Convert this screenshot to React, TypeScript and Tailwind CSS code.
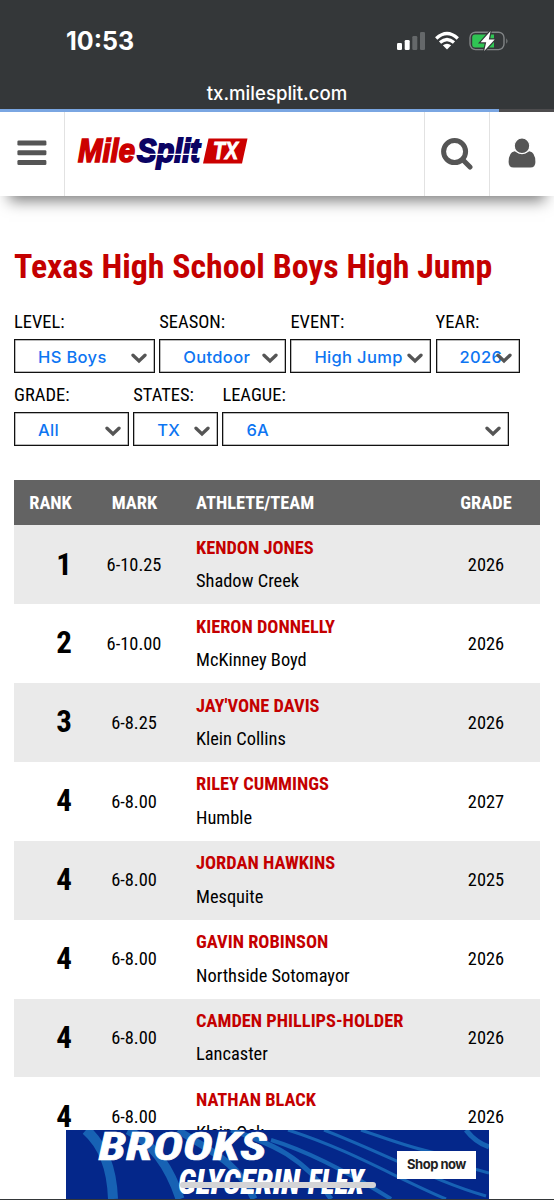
import { clsx } from "clsx";

type Athlete = {
    rank: number;
    mark: string;
    name: string;
    team: string;
    grade: string;
};

const ATHLETES: Athlete[] = [
    { rank: 1, mark: "6-10.25", name: "Kendon Jones", team: "Shadow Creek", grade: "2026" },
    { rank: 2, mark: "6-10.00", name: "Kieron Donnelly", team: "McKinney Boyd", grade: "2026" },
    { rank: 3, mark: "6-8.25", name: "Jay'Vone Davis", team: "Klein Collins", grade: "2026" },
    { rank: 4, mark: "6-8.00", name: "Riley Cummings", team: "Humble", grade: "2027" },
    { rank: 4, mark: "6-8.00", name: "Jordan Hawkins", team: "Mesquite", grade: "2025" },
    { rank: 4, mark: "6-8.00", name: "Gavin Robinson", team: "Northside Sotomayor", grade: "2026" },
    { rank: 4, mark: "6-8.00", name: "Camden Phillips-Holder", team: "Lancaster", grade: "2026" },
    { rank: 4, mark: "6-8.00", name: "Nathan Black", team: "Klein Oak", grade: "2026" },
];

const FILTER_ROWS = [
    [
        { label: "LEVEL:", value: "HS Boys", width: "w-[141px]" },
        { label: "SEASON:", value: "Outdoor", width: "w-[127px]" },
        { label: "EVENT:", value: "High Jump", width: "w-[141px]" },
        { label: "YEAR:", value: "2026", width: "w-[84px]" },
    ],
    [
        { label: "GRADE:", value: "All", width: "w-[115px]" },
        { label: "STATES:", value: "TX", width: "w-[85px]" },
        { label: "LEAGUE:", value: "6A", width: "w-[287px]" },
    ],
];

function StatusIcons() {
    return (
        <svg width="114" height="24" viewBox="0 0 114 24">
            <rect x="1" y="13" width="5" height="7" rx="1.3" fill="#fff" />
            <rect x="8.7" y="10" width="5" height="10" rx="1.3" fill="#fff" />
            <rect x="16.3" y="6" width="5" height="14" rx="1.3" fill="#65686a" />
            <rect x="24" y="2" width="5" height="18" rx="1.3" fill="#65686a" />
            <g fill="none" stroke="#fff" strokeWidth="3.3">
                <path d="M40.2 8.5Q51 -1.5 61.8 8.5" />
                <path d="M44 12.6Q51 6.4 58 12.6" />
            </g>
            <path d="M46.8 15.3Q51 12 55.2 15.3L51 19.6Z" fill="#fff" />
            <rect x="74" y="2.2" width="34" height="17.4" rx="5.5" fill="none" stroke="#818486" strokeWidth="1.4" />
            <path d="M110.3 8.2Q112.7 11 110.3 13.8Z" fill="#818486" />
            <path d="M79 4.6H98V17.4H79Q76.2 17.4 76.2 14.5V7.5Q76.2 4.6 79 4.6Z" fill="#30c554" />
            <path d="M94.6 1L84.6 12.2H90.2L88.2 21L98.7 9.5H92.8Z" fill="#fff" stroke="#343739" strokeWidth="2.4" paintOrder="stroke" />
        </svg>
    );
}

function Logo() {
    return (
        <svg className="overflow-visible font-['Liberation_Sans',sans-serif] font-bold italic" width="172" height="38" viewBox="0 0 172 38">
            <text x="1" y="26.2" fontSize="33.5" fill="#cc0000" stroke="#cc0000" strokeWidth="1.7" textLength="57" lengthAdjust="spacingAndGlyphs">Mile</text>
            <text x="60" y="26.2" fontSize="33.5" fill="#0b0363" stroke="#0b0363" strokeWidth="1.9" textLength="63" lengthAdjust="spacingAndGlyphs">Split</text>
            <path d="M60 18.3H126" stroke="#fff" strokeWidth="1.2" />
            <path d="M131.5 2.5H170.5L165 27.5H126Z" fill="#cc0000" />
            <text x="136" y="23.2" fontSize="24.5" fill="#fff" stroke="#fff" strokeWidth="1" textLength="25" lengthAdjust="spacingAndGlyphs">TX</text>
        </svg>
    );
}

function Header() {
    return (
        <header className="relative flex h-[84px] bg-white shadow-[0_14px_14px_-9px_rgba(0,0,0,0.5)]">
            <div className="flex w-[65px] items-center justify-center border-r border-[#e2e2e2] pb-0.5 pr-px">
                <svg width="30" height="26" viewBox="0 0 30 26" fill="#555">
                    <rect x="0.4" y="0.5" width="29" height="5" rx="1.3" />
                    <rect x="0.4" y="10.3" width="29" height="5" rx="1.3" />
                    <rect x="0.4" y="20.1" width="29" height="5" rx="1.3" />
                </svg>
            </div>
            <div className="flex-1 pl-3 pt-6">
                <Logo />
            </div>
            <div className="flex w-[65px] items-center justify-center border-l border-[#e2e2e2]">
                <svg width="32" height="32" viewBox="0 0 32 32" fill="none" stroke="#555">
                    <circle cx="13.6" cy="13.6" r="11" strokeWidth="5" />
                    <path d="M21.5 21.5L29 29" strokeWidth="5" strokeLinecap="round" />
                </svg>
            </div>
            <div className="flex w-[65px] items-center justify-center border-l border-[#e2e2e2] pb-0.5">
                <svg width="28" height="30" viewBox="0 0 28 30">
                    <path d="M6.7 13.2Q14 18.5 21.3 13.2Q27.4 14.2 27.4 24Q27.4 29.5 22.4 29.5H5.6Q0.6 29.5 0.6 24Q0.6 14.2 6.7 13.2Z" fill="#555" />
                    <circle cx="14" cy="7.8" r="7.8" fill="#555" stroke="#fff" strokeWidth="1.2" />
                </svg>
            </div>
        </header>
    );
}

function Select({ label, value, width }: { label: string; value: string; width: string }) {
    return (
        <div className={width}>
            <div className="flex h-[34px] items-center text-[18.5px] leading-none">{label}</div>
            <div className="relative flex h-[34px] items-center border border-[#111] bg-white pl-[23px] pt-0.5 font-['Inter',sans-serif] text-[16.5px] font-medium tracking-[0.35px] text-[#0d75f2] shadow-[inset_0_0_0_0.5px_#777]">
                <span className="whitespace-nowrap">{value}</span>
                <svg className="absolute right-[7px] top-[13px]" width="16" height="11" viewBox="0 0 16 11">
                    <path d="M2 2.2L8 8L14 2.2" fill="none" stroke="#555" strokeWidth="3.3" strokeLinecap="round" />
                </svg>
            </div>
        </div>
    );
}

function Banner() {
    return (
        <div className="absolute left-[66px] top-[1130px] h-[69px] w-[423px] overflow-hidden bg-[#04278a]">
            <svg width="423" height="69" viewBox="0 0 423 69">
                <g fill="none" stroke="#1762b4">
                    <path d="M20 0C36 14 46 38 47 69" strokeWidth="10" />
                    <path d="M62 0C88 14 104 38 114 69" strokeWidth="9" />
                    <path d="M112 0C145 22 170 30 188 69" strokeWidth="7" />
                    <path d="M165 0C205 13 240 28 265 69" strokeWidth="5" />
                    <path d="M205 10C245 22 285 44 325 69" strokeWidth="4" />
                    <path d="M222 0C285 20 330 48 380 69" strokeWidth="3" />
                    <path d="M258 0C320 24 370 52 420 66" strokeWidth="3" />
                    <path d="M295 0C330 12 345 18 370 23M398 36L423 43" strokeWidth="3" />
                    <path d="M400 0Q409 12 423 17" strokeWidth="5" />
                </g>
                <g className="font-black italic" fill="#fff">
                    <text className="font-bold" x="32.5" y="30" fontSize="38" textLength="168" lengthAdjust="spacingAndGlyphs" stroke="#fff" strokeWidth="0.7">BROOKS</text>
                    <text x="112" y="64" fontSize="35" textLength="122" lengthAdjust="spacingAndGlyphs">GLYCERIN</text>
                    <text x="242" y="64" fontSize="35" textLength="56" lengthAdjust="spacingAndGlyphs">FLEX</text>
                </g>
            </svg>
            <div className="absolute left-[331px] top-[21px] flex h-7 w-[79px] items-center justify-center bg-white font-['Inter',sans-serif] text-[13px] font-bold tracking-[-0.5px] text-[#222]">
                Shop now
            </div>
        </div>
    );
}

export default function App() {
    return (
        <div className="relative h-[1200px] w-[554px] overflow-hidden bg-white font-['Roboto_Condensed','Roboto',sans-serif] text-black [font-stretch:75%]">
            <div className="relative h-[109px] bg-[#343739] font-['Inter',sans-serif] text-white [font-stretch:normal]">
                <div className="flex h-[82px] items-center justify-between pl-[66px] pr-[44px] pt-px">
                    <span className="text-[25px] font-bold leading-none">10:53</span>
                    <div className="pt-px">
                        <StatusIcons />
                    </div>
                </div>
                <div className="text-center text-[18.6px] font-medium leading-[22px]">tx.milesplit.com</div>
            </div>
            <div className="h-[3px] bg-[#4d4c4e]">
                <div className="h-full w-[499px] bg-[#7aa6e2]" />
            </div>
            <Header />

            <main className="pl-[14px] pt-[48px]">
                <h1 className="h-[45px] whitespace-nowrap text-[33.85px] font-bold leading-[45px] text-[#c40000]">
                    Texas High School Boys High Jump
                </h1>
                <div className="mt-4 flex flex-col gap-[5px]">
                    {FILTER_ROWS.map((row, i) => (
                        <div key={i} className="flex gap-[4.2px]">
                            {row.map((f) => (
                                <Select key={f.label} {...f} />
                            ))}
                        </div>
                    ))}
                </div>

                <div className="mt-[34.4px] w-[526px] text-[18.4px]">
                    <div className="flex h-[45px] items-center bg-[#636363] font-bold text-white">
                        <div className="w-[73px] text-center">RANK</div>
                        <div className="w-[95px] text-center">MARK</div>
                        <div className="flex-1 pl-[14px]">ATHLETE/TEAM</div>
                        <div className="w-[108px] text-center">GRADE</div>
                    </div>
                    {ATHLETES.map((a, i) => (
                        <div key={a.name} className={clsx("flex h-[78.86px] items-center", i % 2 === 0 ? "bg-[#eaeaea]" : "bg-white")}>
                            <div className="w-[58px] text-right text-[31px] font-bold">{a.rank}</div>
                            <div className="ml-[14px] w-24 text-center">{a.mark}</div>
                            <div className="flex-1 pb-px pl-[14px] leading-[33.5px]">
                                <div className="font-bold uppercase text-[#c40000]">{a.name}</div>
                                <div>{a.team}</div>
                            </div>
                            <div className="w-[108px] text-center">{a.grade}</div>
                        </div>
                    ))}
                </div>
            </main>

            <Banner />
            <div className="absolute left-[180px] top-[1182px] h-[6px] w-[196px] rounded-full bg-[#d4d4d6]" />
            <div className="absolute bottom-0 left-0 h-px w-full bg-[#343739]" />
        </div>
    );
}
